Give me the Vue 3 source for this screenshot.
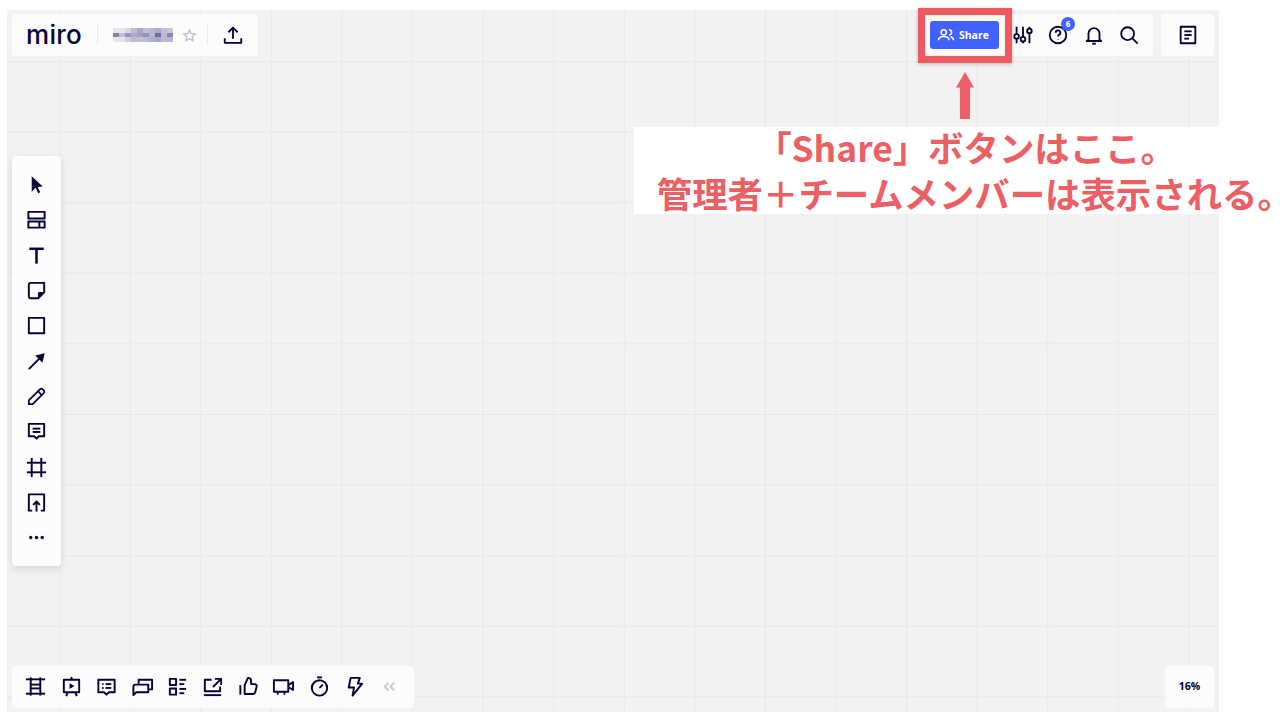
<script setup>
// 左側ツールバー
const leftTools = [
  { fill: ['M7 3.500l11.500 10.600-5.300.5 2.700 5.600-2.100 1-2.700-5.700L7 19.500z'] },
  { d: ['M3.500 4h17v7h-17z', 'M3.500 14h17v6.500h-17z', 'M15 14v6.500'] },
  { d: ['M4.500 5h15', 'M12 5v15.500'], w: 2.6 },
  { d: ['M4 6a2 2 0 0 1 2-2h14v10l-6 6H6a2 2 0 0 1-2-2z'], fill: ['M20 13.500h-5a1.500 1.500 0 0 0-1.500 1.500v5z'] },
  { d: ['M4 4h16v16H4z'] },
  { d: ['M4 20L16 8'], fill: ['M20.500 3.500l-9.800 2.300 7.500 7.500z'] },
  { d: ['M15.500 4.500a2 2 0 0 1 3 0l1 1a2 2 0 0 1 0 3L8 20H4v-4z', 'M13.500 6.500l4 4'], w: 1.8 },
  { d: ['M4 4h16v13h-5.500L12 19.500 9.500 17H4z', 'M8 9h8', 'M8 12.500h8'] },
  { d: ['M7 2v20', 'M17 2v20', 'M2 7h20', 'M2 17h20'] },
  { d: ['M7.500 20.500H4v-17h16v17h-3.500', 'M12 21.500V11', 'M8.500 14.500L12 11l3.500 3.500'] },
  { fill: ['M4.200 12a1.800 1.800 0 1 0 3.600 0a1.800 1.800 0 1 0-3.600 0z', 'M10.200 12a1.800 1.800 0 1 0 3.600 0a1.800 1.800 0 1 0-3.600 0z', 'M16.200 12a1.800 1.800 0 1 0 3.600 0a1.800 1.800 0 1 0-3.600 0z'] }
]

// 下部ツールバー
const bottomTools = [
  { d: ['M2 4.500h20', 'M2 19.500h20', 'M7 2.500v19', 'M17 2.500v19', 'M7 10h10', 'M7 14h10'] },
  { d: ['M4 5h16v13H4z', 'M12 2v3', 'M8 18l-1.500 4', 'M16 18l1.500 4'], fill: ['M10 8.500l5 3-5 3z'] },
  { d: ['M3.500 5h17v13h-6L12 20.500 9.500 18h-6z', 'M7.500 9.500h1.500', 'M11 9.500h6', 'M7.500 13.500h1.500', 'M11 13.500h6'] },
  { d: ['M8 9V5h14v10h-4', 'M2.500 21v-9a2 2 0 0 1 2-2H18v8H5.500z'] },
  { d: ['M4 4h6.500v6.500H4z', 'M4 14h6.500v6.500H4z', 'M14 5h7', 'M14 9.500h5', 'M14 14.500h7', 'M14 19h5'] },
  { d: ['M11 5H4v12h16v-5', 'M3 21h18', 'M14.500 4H21v6.500', 'M21 4l-8.500 8.500'] },
  { d: ['M8 10.500l3.500-7.500c2 0 3.200 1.200 3.200 3v3.500h3.800a2 2 0 0 1 2 2.500l-1.500 6a2.500 2.500 0 0 1-2.500 1.800H8z', 'M3.500 10.500v10'] },
  { d: ['M2 5.500h15v12H2z', 'M17 10.500l5-3v8l-5-3', 'M6 17.500v3', 'M13 17.500v3'] },
  { d: ['M12 5.500a8 8 0 1 1 0 16a8 8 0 1 1 0-16z', 'M9.500 2.500h5', 'M12 13.500l3.500-3.500'] },
  { d: ['M8 3h9.500l-2 6H20L10 21.500l1.500-8.500H6z'] },
  { d: ['M11 8l-4 4 4 4', 'M17 8l-4 4 4 4'], color: '#c9c9d4' }
]

// 右上のアイコン
const topTools = [
  { d: ['M5 3v8', 'M5 16v5', 'M12 3v11', 'M12 19v2', 'M19 3v2', 'M19 10v11', 'M5 11a2.500 2.500 0 1 0 0 5a2.500 2.500 0 1 0 0-5z', 'M12 14a2.500 2.500 0 1 0 0 5a2.500 2.500 0 1 0 0-5z', 'M19 5a2.500 2.500 0 1 0 0 5a2.500 2.500 0 1 0 0-5z'] },
  { d: ['M12 3a9 9 0 1 0 0 18a9 9 0 1 0 0-18z', 'M9.500 9.500a2.500 2.500 0 1 1 3.700 2.200c-.8.500-1.200 1-1.200 1.800', 'M12 16.500v.6'], badge: '6' },
  { d: ['M6 17v-6.500a6 6 0 0 1 12 0V17l2 1.500H4z', 'M10 21.500h4'] },
  { d: ['M10.500 3.500a7 7 0 1 0 0 14a7 7 0 1 0 0-14z', 'M16 16l5.500 5.500'] }
]

const upload = { d: ['M12 16V4', 'M7 9l5-5 5 5', 'M3 15.500V20.500h18v-5'] }
const notes = { d: ['M4 3h16v18H4z', 'M8 8h8', 'M8 12h8', 'M8 16h5'] }

// ぼかされたボード名のモザイク
const mosaic = [
  '#e4e3ec', '#e6e5ee', '#d8d7e6', '#bdbbd4', '#a9a6c7', '#c1bfd8', '#b8b5d1', '#aca9ca', '#c1bfd7', '#c8c6dc',
  '#85819f', '#c4c2da', '#9895ba', '#b0adca', '#a3a0c2', '#9390b8', '#b9b6d1', '#6f6b98', '#bdbbd3', '#8a87ae',
  '#e6e5ee', '#e4e3ec', '#cfcde0', '#bdbbd4', '#c1bfd8', '#bbb9d3', '#b1aecd', '#aaa7c8', '#bab8d2', '#b8b6d1'
]
</script>

<template>
  <div class="page">
    <div class="board">
      <div class="top-row">
        <div class="panel board-info">
          <span class="logo">miro</span>
          <i class="divider logo-divider"></i>
          <div class="mosaic">
            <span v-for="(color, i) in mosaic" :key="i" :style="{ background: color }"></span>
          </div>
          <svg class="star" viewBox="0 0 24 24">
            <path d="M12 4l2.400 5.200 5.600.7-4.100 3.900 1.100 5.600-5-2.800-5 2.800 1.100-5.600L4 9.900l5.600-.7z" />
          </svg>
          <i class="divider"></i>
          <span class="icon-btn upload-btn">
            <svg class="icon" viewBox="0 0 24 24">
              <path v-for="p in upload.d" :key="p" :d="p" />
            </svg>
          </span>
        </div>

        <div class="top-right">
          <div class="panel actions">
            <button class="share-btn">
              <svg class="share-icon" viewBox="0 0 24 24">
                <path d="M9 5a3.500 3.500 0 1 0 0 7a3.500 3.500 0 1 0 0-7z" />
                <path d="M2 19c0-3.500 3-5 7-5s7 1.500 7 5" />
                <path d="M16 5a3.500 3.500 0 0 1 0 7" />
                <path d="M18 14.300c2.500.5 4 2 4 4.700" />
              </svg>
              Share
            </button>
            <span v-for="(tool, i) in topTools" :key="i" class="icon-btn">
              <svg class="icon" viewBox="0 0 24 24">
                <path v-for="p in tool.d" :key="p" :d="p" />
              </svg>
              <b v-if="tool.badge" class="badge">{{ tool.badge }}</b>
            </span>
          </div>
          <div class="panel notes">
            <svg class="icon" viewBox="0 0 24 24">
              <path v-for="p in notes.d" :key="p" :d="p" />
            </svg>
          </div>
        </div>
      </div>

      <div class="panel left-bar">
        <span v-for="(tool, i) in leftTools" :key="i" class="icon-btn">
          <svg class="icon tool-icon" viewBox="0 0 24 24" :style="{ strokeWidth: tool.w }">
            <path v-for="p in tool.d" :key="p" :d="p" />
            <path v-for="p in tool.fill" :key="p" :d="p" class="solid" />
          </svg>
        </span>
      </div>

      <div class="bottom-row">
        <div class="panel bottom-bar">
          <span v-for="(tool, i) in bottomTools" :key="i" class="icon-btn">
            <svg class="icon tool-icon" viewBox="0 0 24 24" :style="{ stroke: tool.color }">
              <path v-for="p in tool.d" :key="p" :d="p" />
              <path v-for="p in tool.fill" :key="p" :d="p" class="solid" />
            </svg>
          </span>
        </div>
        <div class="panel zoom-level">16%</div>
      </div>
    </div>

    <!-- 注釈 -->
    <div class="highlight"></div>
    <div class="arrow"></div>
    <div class="note-bg"></div>
    <div class="note-text">
      <p>「Share」ボタンはここ。</p>
      <p class="note-second">管理者＋チームメンバーは表示される<span class="halt">。</span></p>
    </div>
  </div>
</template>

<style scoped>
.page {
  position: relative;
  width: 1280px;
  height: 717px;
  overflow: hidden;
  background: #fff;
  padding: 10px 61px 5px 7px;
  box-sizing: border-box;
}

.board {
  height: 100%;
  box-sizing: border-box;
  padding: 4px 5px;
  display: flex;
  flex-direction: column;
  background-color: #f2f2f2;
  background-image:
    linear-gradient(to right, #e8e8e8 1px, transparent 1px),
    linear-gradient(to bottom, #e8e8e8 1px, transparent 1px);
  background-size: 70.6px 70.6px;
  background-position: 52px 51px;
}

.panel {
  background: #fcfcfd;
  border-radius: 4px;
  display: flex;
  align-items: center;
}

.top-row {
  display: flex;
  justify-content: space-between;
}

.board-info {
  width: 246px;
  height: 42px;
  box-sizing: border-box;
  padding-left: 14px;
}

.logo {
  width: 57px;
  font-family: Inter, "Liberation Sans", sans-serif;
  font-size: 26px;
  font-weight: 500;
  letter-spacing: 0.3px;
  color: #050038;
  line-height: 42px;
}

.divider {
  width: 1px;
  height: 20px;
  background: #e8e8ee;
}

.logo-divider {
  margin: 0 15px 0 14px;
}

.mosaic {
  width: 60px;
  height: 14px;
  display: grid;
  grid-template-columns: repeat(10, 6px);
  grid-template-rows: repeat(3, 1fr);
  filter: blur(0.5px);
}

.star {
  width: 17px;
  height: 17px;
  margin: 0 9px 0 8px;
  fill: none;
  stroke: #c3c3d0;
  stroke-width: 2;
}

.upload-btn {
  margin-left: 7px;
}

.icon-btn {
  position: relative;
  width: 35.3px;
  height: 35.3px;
  flex: none;
  display: flex;
  align-items: center;
  justify-content: center;
}

.icon {
  width: 22px;
  height: 22px;
  fill: none;
  stroke: #050038;
  stroke-width: 2;
  stroke-linejoin: round;
}

.tool-icon {
  width: 23px;
  height: 23px;
}

.solid {
  fill: #050038;
  stroke: none;
}

.top-right {
  display: flex;
  gap: 8px;
}

.actions {
  height: 42px;
  box-sizing: border-box;
  padding: 0 6.4px 0 7px;
}

.share-btn {
  width: 69px;
  height: 28px;
  margin-right: 6px;
  padding: 0 4px 0 0;
  border: none;
  border-radius: 3px;
  background: #4262ff;
  color: #fff;
  font-family: "Open Sans", "Liberation Sans", sans-serif;
  font-size: 10.500px;
  font-weight: 700;
  display: flex;
  align-items: center;
  justify-content: center;
  gap: 4px;
}

.share-icon {
  width: 18px;
  height: 18px;
  fill: none;
  stroke: #fff;
  stroke-width: 2;
}

.badge {
  position: absolute;
  top: 0;
  right: 1px;
  width: 14px;
  height: 14px;
  border-radius: 50%;
  background: #4262ff;
  color: #fff;
  font-family: "Open Sans", "Liberation Sans", sans-serif;
  font-size: 8px;
  font-weight: 700;
  line-height: 14px;
  text-align: center;
}

.notes {
  width: 53px;
  height: 42px;
  justify-content: center;
}

.left-bar {
  width: 49px;
  margin-top: 100px;
  padding: 11px 0 10.700px;
  flex-direction: column;
  box-shadow: 0 3px 8px rgba(5, 0, 56, 0.12);
}

.bottom-row {
  margin-top: auto;
  display: flex;
  justify-content: space-between;
}

.bottom-bar {
  height: 42px;
  padding: 0 6.3px;
  gap: 0.1px;
}

.zoom-level {
  width: 49px;
  height: 42px;
  padding-bottom: 2px;
  box-sizing: border-box;
  justify-content: center;
  font-family: "Open Sans", "Liberation Sans", sans-serif;
  font-size: 10.500px;
  font-weight: 700;
  color: #050038;
}

.highlight {
  position: absolute;
  left: 918px;
  top: 8px;
  width: 94px;
  height: 55px;
  box-sizing: border-box;
  border: 7px solid #ee5a60;
  box-shadow: 0 1px 4px rgba(0, 0, 0, 0.25), inset 0 0 3px rgba(0, 0, 0, 0.15);
}

.arrow {
  position: absolute;
  left: 956px;
  top: 72px;
  width: 18px;
  height: 47px;
  background: #f06068;
  clip-path: polygon(50% 0, 100% 33%, 78% 33%, 78% 100%, 22% 100%, 22% 33%, 0 33%);
}

.note-bg {
  position: absolute;
  left: 634px;
  top: 127px;
  width: 585px;
  height: 87px;
  background: #fff;
}

.note-text {
  position: absolute;
  left: 634px;
  top: 123px;
  width: 646px;
  text-align: center;
  font-family: "Noto Sans CJK JP", sans-serif;
  font-size: 35.400px;
  font-weight: 700;
  line-height: 47px;
  color: #ec5f64;
  white-space: nowrap;
}

.note-text p {
  margin: 0;
  padding-left: 18px;
}

.note-text .note-second {
  margin-top: -1px;
}

.halt {
  font-feature-settings: "halt";
}
</style>
